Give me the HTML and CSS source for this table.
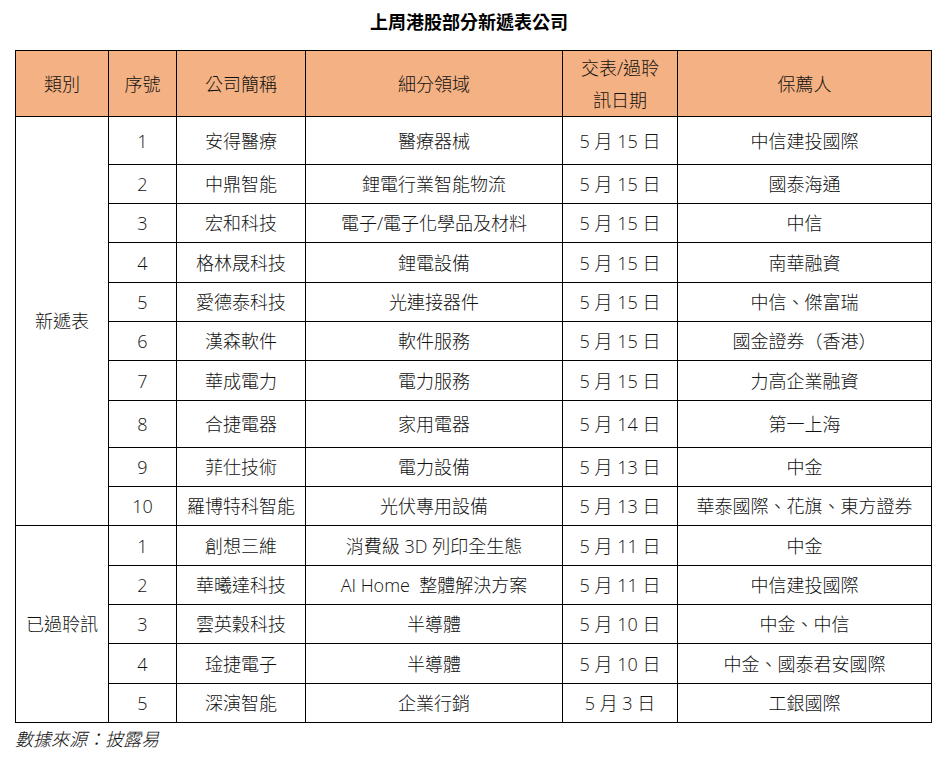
FILE: index.html
```html
<!DOCTYPE html>
<html lang="zh-Hant">
<head>
<meta charset="utf-8">
<title>上周港股部分新遞表公司</title>
<link rel="stylesheet" href="styles.css">
</head>
<body>
<div class="page">
  <h1 class="title">上周港股部分新遞表公司</h1>
  <table class="ipo">
    <colgroup>
      <col class="c-type">
      <col class="c-no">
      <col class="c-name">
      <col class="c-field">
      <col class="c-date">
      <col class="c-sponsor">
    </colgroup>
    <thead>
      <tr class="head">
        <th>類別</th>
        <th>序號</th>
        <th>公司簡稱</th>
        <th>細分領域</th>
        <th class="two">交表/過聆<br>訊日期</th>
        <th>保薦人</th>
      </tr>
    </thead>
    <tbody>
      <tr class="r48">
        <td rowspan="10" class="group group-new">新遞表</td>
        <td>1</td><td>安得醫療</td><td>醫療器械</td><td>5 月 15 日</td><td>中信建投國際</td>
      </tr>
      <tr class="r39"><td>2</td><td>中鼎智能</td><td>鋰電行業智能物流</td><td>5 月 15 日</td><td>國泰海通</td></tr>
      <tr class="r39"><td>3</td><td>宏和科技</td><td>電子/電子化學品及材料</td><td>5 月 15 日</td><td>中信</td></tr>
      <tr class="r40"><td>4</td><td>格林晟科技</td><td>鋰電設備</td><td>5 月 15 日</td><td>南華融資</td></tr>
      <tr class="r39"><td>5</td><td>愛德泰科技</td><td>光連接器件</td><td>5 月 15 日</td><td>中信、傑富瑞</td></tr>
      <tr class="r39"><td>6</td><td>漢森軟件</td><td>軟件服務</td><td>5 月 15 日</td><td>國金證券（香港）</td></tr>
      <tr class="r40"><td>7</td><td>華成電力</td><td>電力服務</td><td>5 月 15 日</td><td>力高企業融資</td></tr>
      <tr class="r47"><td>8</td><td>合捷電器</td><td>家用電器</td><td>5 月 14 日</td><td>第一上海</td></tr>
      <tr class="r39"><td>9</td><td>菲仕技術</td><td>電力設備</td><td>5 月 13 日</td><td>中金</td></tr>
      <tr class="r39"><td>10</td><td>羅博特科智能</td><td>光伏專用設備</td><td>5 月 13 日</td><td>華泰國際、花旗、東方證券</td></tr>
      <tr class="r40">
        <td rowspan="5" class="group">已過聆訊</td>
        <td>1</td><td>創想三維</td><td>消費級 3D 列印全生態</td><td>5 月 11 日</td><td>中金</td>
      </tr>
      <tr class="r39"><td>2</td><td>華曦達科技</td><td>AI Home&nbsp; 整體解決方案</td><td>5 月 11 日</td><td>中信建投國際</td></tr>
      <tr class="r39"><td>3</td><td>雲英穀科技</td><td>半導體</td><td>5 月 10 日</td><td>中金、中信</td></tr>
      <tr class="r40"><td>4</td><td>琻捷電子</td><td>半導體</td><td>5 月 10 日</td><td>中金、國泰君安國際</td></tr>
      <tr class="r39"><td>5</td><td>深演智能</td><td>企業行銷</td><td>5 月 3 日</td><td>工銀國際</td></tr>
    </tbody>
  </table>
  <p class="source">數據來源<span class="colon">：</span>披露易</p>
</div>
</body>
</html>
```

FILE: styles.css
```css
html, body {
  margin: 0;
  padding: 0;
  background: #ffffff;
}

body {
  font-family: "Open Sans", "Noto Sans CJK TC", sans-serif;
  color: #111111;
}

.page {
  width: 944px;
  padding-top: 10px;
}

.title {
  margin: 0 0 16px 0;
  padding-right: 6px;
  font-size: 18px;
  line-height: 24px;
  font-weight: 700;
  text-align: center;
  color: #000000;
}

.ipo {
  margin-left: 15px;
  width: 916px;
  table-layout: fixed;
  border-collapse: collapse;
  font-size: 18px;
  font-weight: 300;
}

.c-type { width: 93px; }
.c-no { width: 68px; }
.c-name { width: 129px; }
.c-field { width: 257px; }
.c-date { width: 115px; }
.c-sponsor { width: 254px; }

.ipo th,
.ipo td {
  border: 1px solid #000000;
  padding: 0;
  text-align: center;
  vertical-align: middle;
  white-space: nowrap;
  line-height: 24px;
}

.ipo th {
  background: #f4b183;
  font-weight: 300;
}

.head { height: 66px; }
.head .two { line-height: 32px; }

.r39 { height: 39px; }
.r40 { height: 40px; }
.r47 { height: 47px; }
.r48 { height: 48px; }

.group-new {
  padding-top: 40px;
}

.source {
  margin: 3px 0 0 15px;
  font-size: 18px;
  line-height: 24px;
  font-style: italic;
  font-weight: 300;
}

.source .colon {
  font-family: "Noto Sans CJK SC", sans-serif;
}
```
